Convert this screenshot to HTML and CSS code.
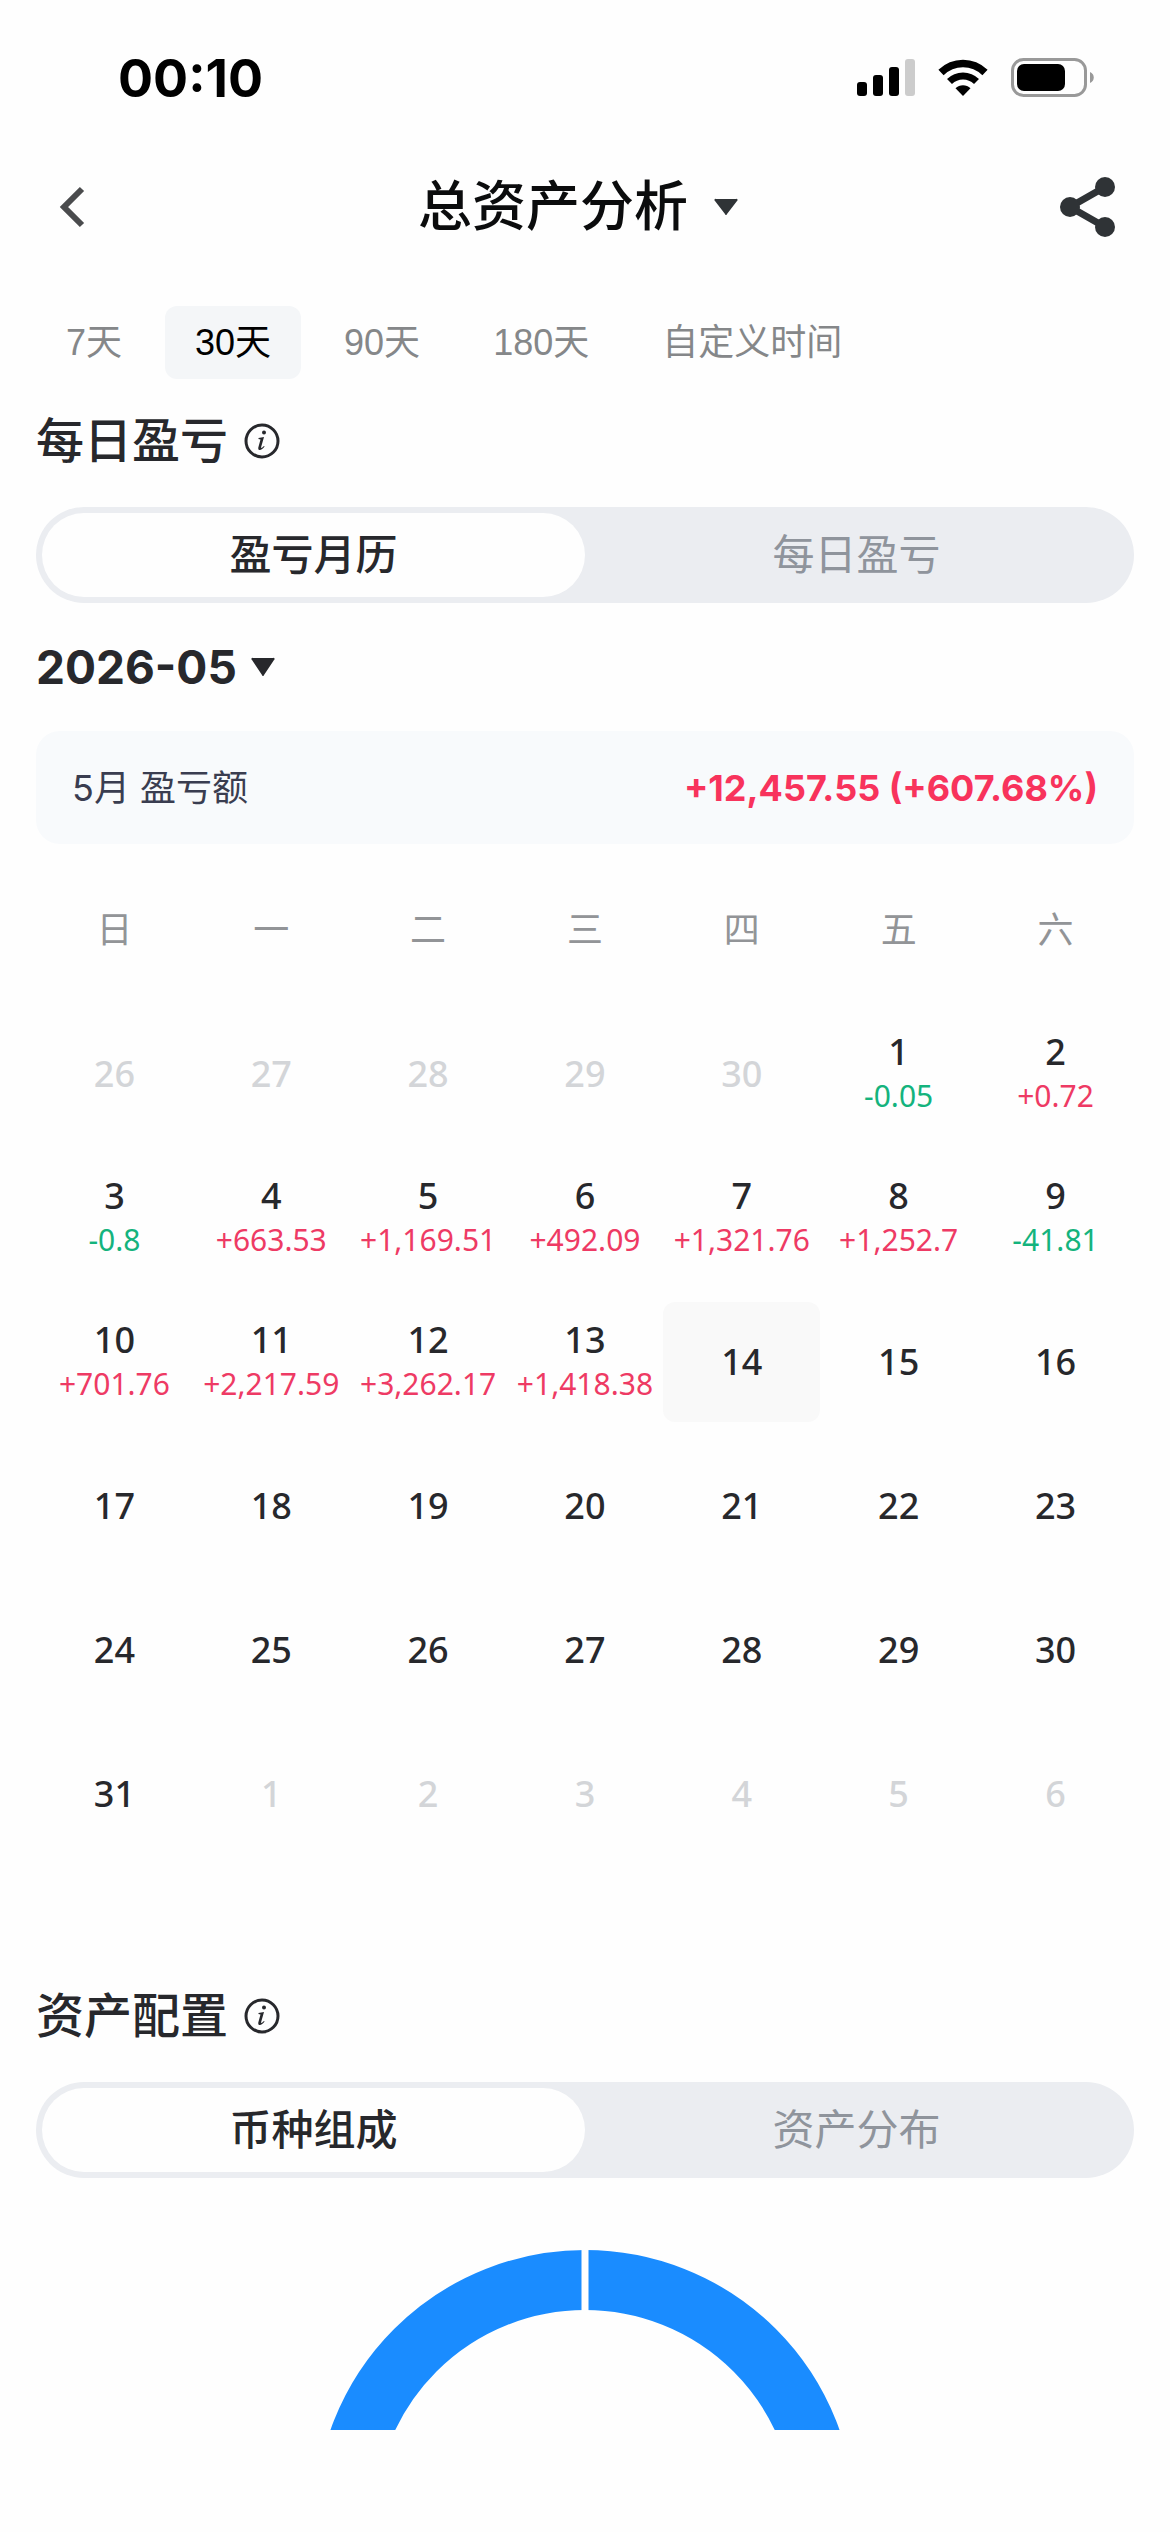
FILE: index.html
```html
<!DOCTYPE html>
<html lang="zh-CN">
<head>
  <meta charset="UTF-8">
  <meta name="viewport" content="width=device-width, initial-scale=1.0">
  <title>总资产分析</title>
  <link rel="stylesheet" href="styles.css">
</head>
<body>
  <div class="status-bar">
    <span class="time">00:10</span>
    <div class="status-icons">
      <svg width="58" height="38" viewBox="0 0 58 38">
        <rect x="0" y="23" width="10" height="14" rx="3"/>
        <rect x="16" y="16" width="10" height="21" rx="3"/>
        <rect x="32" y="8" width="10" height="29" rx="3"/>
        <rect x="48" y="0" width="10" height="37" rx="3" fill="#ccc"/>
      </svg>
      <svg width="52" height="38" viewBox="0 0 52 38">
        <path d="M4 13.5C16.500 1.500 35.500 1.500 48 13.500" fill="none" stroke="#000" stroke-width="7.500"/>
        <path d="M12.500 22.500C20 15 32 15 39.500 22.500" fill="none" stroke="#000" stroke-width="7"/>
        <path d="M26 37l-7.500-7.700c4-4 11-4 15 0z"/>
      </svg>
      <svg width="83" height="40" viewBox="0 0 83 40">
        <rect x="1.500" y="1.500" width="73" height="36" rx="11" fill="none" stroke="#999" stroke-width="3"/>
        <rect x="6" y="6" width="48" height="27" rx="7"/>
        <path d="M79 14c5 2 5 9 0 11z" fill="#999"/>
      </svg>
    </div>
  </div>

  <header class="header">
    <button class="icon-btn" aria-label="返回">
      <svg width="48" height="48" viewBox="0 0 48 48">
        <path d="M34 6L16 24l18 18" fill="none" stroke="#4a4b4d" stroke-width="6"/>
      </svg>
    </button>
    <button class="title">
      总资产分析
      <svg width="24" height="18" viewBox="0 0 24 18"><path d="M2 1h20a1 1 0 0 1 1 2L13 16a1 1 0 0 1-2 0L1 3a1 1 0 0 1 1-2z" fill="#2f3336"/></svg>
    </button>
    <button class="icon-btn" aria-label="分享">
      <svg width="56" height="62" viewBox="0 0 56 62">
        <path d="M45 11L10 31l35 20" fill="none" stroke="#2f3336" stroke-width="7"/>
        <g fill="#2f3336">
          <circle cx="45" cy="11" r="10"/>
          <circle cx="10" cy="31" r="10"/>
          <circle cx="45" cy="51" r="10"/>
        </g>
      </svg>
    </button>
  </header>

  <nav class="range-tabs">
    <button>7天</button>
    <button class="active">30天</button>
    <button>90天</button>
    <button>180天</button>
    <button>自定义时间</button>
  </nav>

  <main class="content">
    <section>
      <h2>每日盈亏
        <svg class="info" viewBox="0 0 36 36">
          <circle cx="18" cy="18" r="16" fill="none" stroke="#27282c" stroke-width="3"/>
          <circle cx="20" cy="9.500" r="2"/>
          <path d="M14.500 15l5.500-1-3 10.500c0 1 1 .5 3-1.500l.6.6c-3 4.500-7 4.400-6.300.9l2.200-8-2-.5z"/>
        </svg>
      </h2>
      <div class="segment">
        <button class="active">盈亏月历</button>
        <button>每日盈亏</button>
      </div>

      <button class="month">
        2026-05
        <svg width="24" height="20" viewBox="0 0 24 20"><path d="M2 1h20a1 1 0 0 1 1 2L13 18a1 1 0 0 1-2 0L1 3a1 1 0 0 1 1-2z" fill="#27282c"/></svg>
      </button>

      <div class="summary">
        <span>5月 盈亏额</span>
        <strong>+12,457.55 (+607.68%)</strong>
      </div>

      <table class="calendar">
        <thead>
          <tr><th>日</th><th>一</th><th>二</th><th>三</th><th>四</th><th>五</th><th>六</th></tr>
        </thead>
        <tbody>
          <tr>
            <td class="other"><div class="day">26</div></td>
            <td class="other"><div class="day">27</div></td>
            <td class="other"><div class="day">28</div></td>
            <td class="other"><div class="day">29</div></td>
            <td class="other"><div class="day">30</div></td>
            <td><div class="day">1<span class="down">-0.05</span></div></td>
            <td><div class="day">2<span class="up">+0.72</span></div></td>
          </tr>
          <tr>
            <td><div class="day">3<span class="down">-0.8</span></div></td>
            <td><div class="day">4<span class="up">+663.53</span></div></td>
            <td><div class="day">5<span class="up">+1,169.51</span></div></td>
            <td><div class="day">6<span class="up">+492.09</span></div></td>
            <td><div class="day">7<span class="up">+1,321.76</span></div></td>
            <td><div class="day">8<span class="up">+1,252.7</span></div></td>
            <td><div class="day">9<span class="down">-41.81</span></div></td>
          </tr>
          <tr>
            <td><div class="day">10<span class="up">+701.76</span></div></td>
            <td><div class="day">11<span class="up">+2,217.59</span></div></td>
            <td><div class="day">12<span class="up">+3,262.17</span></div></td>
            <td><div class="day">13<span class="up">+1,418.38</span></div></td>
            <td><div class="day today">14</div></td>
            <td><div class="day">15</div></td>
            <td><div class="day">16</div></td>
          </tr>
          <tr>
            <td><div class="day">17</div></td>
            <td><div class="day">18</div></td>
            <td><div class="day">19</div></td>
            <td><div class="day">20</div></td>
            <td><div class="day">21</div></td>
            <td><div class="day">22</div></td>
            <td><div class="day">23</div></td>
          </tr>
          <tr>
            <td><div class="day">24</div></td>
            <td><div class="day">25</div></td>
            <td><div class="day">26</div></td>
            <td><div class="day">27</div></td>
            <td><div class="day">28</div></td>
            <td><div class="day">29</div></td>
            <td><div class="day">30</div></td>
          </tr>
          <tr>
            <td><div class="day">31</div></td>
            <td class="other"><div class="day">1</div></td>
            <td class="other"><div class="day">2</div></td>
            <td class="other"><div class="day">3</div></td>
            <td class="other"><div class="day">4</div></td>
            <td class="other"><div class="day">5</div></td>
            <td class="other"><div class="day">6</div></td>
          </tr>
        </tbody>
      </table>
    </section>

    <section class="allocation">
      <h2>资产配置
        <svg class="info" viewBox="0 0 36 36">
          <circle cx="18" cy="18" r="16" fill="none" stroke="#27282c" stroke-width="3"/>
          <circle cx="20" cy="9.500" r="2"/>
          <path d="M14.500 15l5.500-1-3 10.500c0 1 1 .5 3-1.500l.6.6c-3 4.500-7 4.400-6.300.9l2.200-8-2-.5z"/>
        </svg>
      </h2>
      <div class="segment">
        <button class="active">币种组成</button>
        <button>资产分布</button>
      </div>
      <!-- only the top of the ring is above the fold -->
      <svg class="donut" width="540" height="180" viewBox="0 0 540 180">
        <circle cx="270" cy="270" r="240" fill="none" stroke="#1a8cff" stroke-width="60"/>
        <path d="M270 0v70" stroke="#fefefe" stroke-width="7"/>
      </svg>
    </section>
  </main>
</body>
</html>
```

FILE: styles.css
```css
* {
  box-sizing: border-box;
}
body {
  margin: 0;
  background: #fefefe;
  color: #27282c;
  font-family: Inter, 'Noto Sans CJK SC', sans-serif;
}
button {
  border: none;
  background: none;
  padding: 0;
  font: inherit;
  color: inherit;
  cursor: pointer;
}
svg {
  display: block;
  flex: none;
}

.status-bar {
  display: flex;
  justify-content: space-between;
  align-items: center;
  height: 156px;
  padding: 0 76px 0 118px;
  color: #000;
}
.time {
  font-size: 52px;
  font-weight: 700;
}
.status-icons {
  display: flex;
  align-items: center;
  gap: 22px;
}

.header {
  display: flex;
  justify-content: space-between;
  align-items: center;
  height: 102px;
  padding: 0 54px 0 48px;
}
.title {
  display: flex;
  align-items: center;
  gap: 26px;
  font-size: 54px;
  font-weight: 500;
  line-height: 56px;
  color: #0b0c0d;
}

.range-tabs {
  display: flex;
  gap: 13px;
  margin-top: 48px;
  padding: 0 36px;
  font-family: 'Liberation Sans', 'Noto Sans CJK SC', sans-serif;
  font-size: 36px;
  line-height: 44px;
  color: #858789;
}
.range-tabs button {
  height: 73px;
  padding: 0 30px;
  border-radius: 12px;
}
.range-tabs .active {
  background: #f4f6f8;
  color: #000;
}

.content {
  padding: 0 36px;
}
h2 {
  display: flex;
  align-items: center;
  gap: 16px;
  margin: 34px 0 38px;
  font-size: 48px;
  font-weight: 500;
  line-height: 56px;
}
.info {
  width: 36px;
  height: 36px;
  fill: #27282c;
}
.segment {
  display: flex;
  height: 96px;
  padding: 6px;
  border-radius: 48px;
  background: #ebedf1;
  font-size: 42px;
  line-height: 48px;
  color: #8f949c;
}
.segment button {
  flex: 1;
  border-radius: 42px;
}
.segment .active {
  background: #fefefe;
  color: #27282c;
  font-weight: 500;
}
.month {
  display: flex;
  align-items: center;
  gap: 14px;
  margin: 36px 0;
  font-size: 46px;
  font-weight: 700;
  line-height: 56px;
}
.summary {
  display: flex;
  justify-content: space-between;
  align-items: center;
  height: 113px;
  padding: 0 36px;
  border-radius: 24px;
  background: #f8fafc;
  font-size: 36px;
  line-height: 44px;
  color: #3a3d50;
}
.summary strong {
  color: #f8335c;
  font-weight: 700;
}

.calendar {
  width: 100%;
  margin-top: 62px;
  table-layout: fixed;
  border-collapse: collapse;
}
.calendar th {
  padding: 0 0 48px;
  font-size: 36px;
  font-weight: 400;
  line-height: 48px;
  color: #929497;
}
.calendar td {
  padding: 12px 0;
}
.day {
  display: flex;
  flex-direction: column;
  align-items: center;
  justify-content: center;
  height: 120px;
  border-radius: 12px;
  font-family: 'Noto Sans', sans-serif;
  font-size: 36px;
  font-weight: 500;
  line-height: 44px;
}
.day span {
  font-size: 30px;
  font-weight: 400;
}
.today {
  background: #f9f9f9;
}
.other {
  color: #d3d5d8;
}
.up {
  color: #ee3a64;
}
.down {
  color: #14b37d;
}

.allocation {
  margin-top: 122px;
}
.donut {
  margin: 72px auto 0;
}
```
